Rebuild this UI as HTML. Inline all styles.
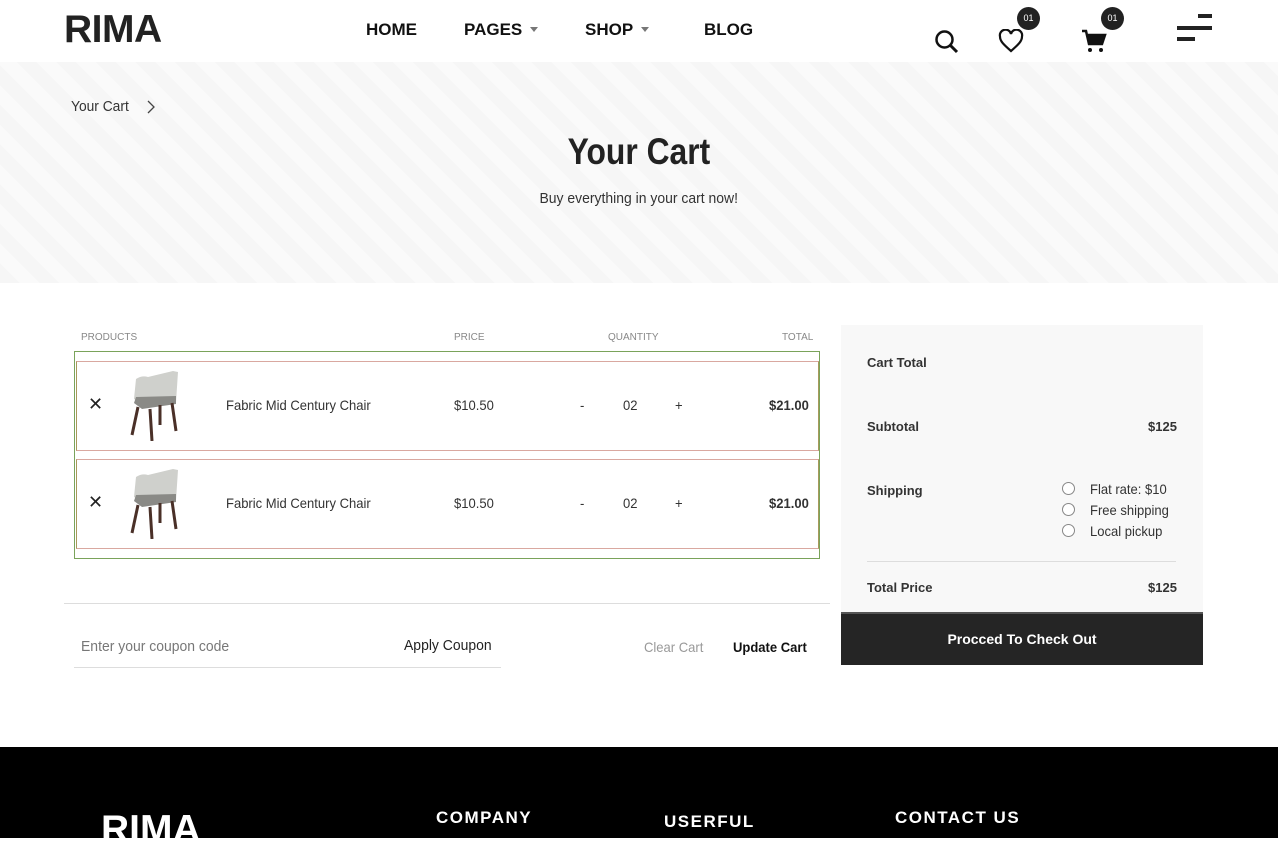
<!DOCTYPE html>
<html><head><meta charset="utf-8"><style>
*{margin:0;padding:0;box-sizing:border-box}
body{width:1280px;height:838px;overflow:hidden;background:#fff;font-family:"Liberation Sans",sans-serif;color:#222;position:relative}
.a{position:absolute;white-space:nowrap}
.nav{font-weight:bold;font-size:17px;color:#111;top:20px}
.car{display:inline-block;width:0;height:0;border-left:4px solid transparent;border-right:4px solid transparent;border-top:5px solid #777;margin-left:8px;vertical-align:3px}
.badge{position:absolute;width:23px;height:23px;border-radius:50%;background:#222;color:#fff;font-size:9px;text-align:center;line-height:23px}
.banner{position:absolute;left:0;top:62px;width:1278px;height:221px;background:#f8f8f8;background-image:repeating-linear-gradient(45deg,#f6f6f6 0 14px,#fafafa 14px 28px)}
.hd{font-size:10px;color:#888;top:332px}
.row{position:absolute;left:76px;width:743px;height:90px;border:1px solid #a89a5c;border-top-color:#d9a8a0;border-bottom-color:#d9a8a0}
.t{font-size:14px;color:#333;transform:scaleX(.93);transform-origin:left}
.sm{font-size:13px;font-weight:bold;color:#333}
.radio{position:absolute;width:13px;height:13px;border:1px solid #888;border-radius:50%;background:#fff}
.fh{color:#fff;font-weight:bold;font-size:17px;letter-spacing:1.5px}
</style></head><body>
<div class="a" style="left:64px;top:8px;font-size:39px;font-weight:bold;color:#222;letter-spacing:-0.5px">RIMA</div>
<div class="a nav" style="left:366px">HOME</div>
<div class="a nav" style="left:464px">PAGES<span class="car"></span></div>
<div class="a nav" style="left:585px">SHOP<span class="car"></span></div>
<div class="a nav" style="left:704px">BLOG</div>
<svg class="a" style="left:934px;top:29px" width="26" height="26" viewBox="0 0 26 26"><circle cx="10.5" cy="10.5" r="8" fill="none" stroke="#111" stroke-width="2.5"/><line x1="16.5" y1="16.5" x2="23" y2="23" stroke="#111" stroke-width="3"/></svg>
<svg class="a" style="left:998px;top:29px" width="26" height="24" viewBox="0 0 26 24"><path d="M13 22 C5 15 2 12 2 7.5 A5.5 5.5 0 0 1 13 5 A5.5 5.5 0 0 1 24 7.5 C24 12 21 15 13 22Z" fill="none" stroke="#111" stroke-width="2.2"/></svg>
<div class="badge" style="left:1017px;top:7px">01</div>
<svg class="a" style="left:1081px;top:29px" width="26" height="25" viewBox="0 0 26 25"><path d="M1 2h4l3 13h13l3-9H7" fill="none" stroke="#111" stroke-width="2.5"/><path d="M7 6h17l-3 9H8z" fill="#111"/><circle cx="9" cy="21" r="2" fill="#111"/><circle cx="20" cy="21" r="2" fill="#111"/></svg>
<div class="badge" style="left:1101px;top:7px">01</div>
<div class="a" style="left:1198px;top:14px;width:14px;height:4px;background:#222"></div>
<div class="a" style="left:1177px;top:26px;width:35px;height:4px;background:#222"></div>
<div class="a" style="left:1177px;top:37px;width:18px;height:4px;background:#222"></div>

<div class="banner"></div>
<div class="a" style="left:71px;top:98px;font-size:15px;color:#333;transform:scaleX(.92);transform-origin:left">Your Cart</div>
<svg class="a" style="left:146px;top:99px" width="10" height="16"><path d="M2 2l6 6-6 6" fill="none" stroke="#444" stroke-width="1.3"/></svg>
<div class="a" style="left:0;width:1278px;text-align:center;top:131px;font-size:37px;font-weight:bold;color:#222"><span style="display:inline-block;transform:scaleX(.86)">Your Cart</span></div>
<div class="a" style="left:0;width:1278px;text-align:center;top:190px;font-size:15px;color:#333"><span style="display:inline-block;transform:scaleX(.93)">Buy everything in your cart now!</span></div>

<div class="a hd" style="left:81px">PRODUCTS</div>
<div class="a hd" style="left:454px">PRICE</div>
<div class="a hd" style="left:608px">QUANTITY</div>
<div class="a hd" style="left:782px">TOTAL</div>
<div class="a" style="left:74px;top:351px;width:746px;height:208px;border:1px solid #7aa35a"></div>
<div class="row" style="top:361px"></div>
<div class="row" style="top:459px"></div>

<div class="a" style="left:88px;top:394px;font-size:18px;color:#222;font-weight:normal">✕</div>
<div class="a" style="left:88px;top:492px;font-size:18px;color:#222">✕</div>
<svg class="a" style="left:128px;top:369px" width="54" height="72" viewBox="0 0 54 72"><path d="M8 10 Q14 6 20 8 L45 2 L50 3 L48 33 L16 36 L6 30Z" fill="#cfd0cc"/><path d="M8 28 L48 27 L48 35 L14 40 L6 34Z" fill="#8a8a86"/><path d="M10 38 L4 66 M22 40 L24 72 M44 34 L48 62 M32 36 L32 56" stroke="#4a3028" stroke-width="3"/></svg>
<svg class="a" style="left:128px;top:467px" width="54" height="72" viewBox="0 0 54 72"><path d="M8 10 Q14 6 20 8 L45 2 L50 3 L48 33 L16 36 L6 30Z" fill="#cfd0cc"/><path d="M8 28 L48 27 L48 35 L14 40 L6 34Z" fill="#8a8a86"/><path d="M10 38 L4 66 M22 40 L24 72 M44 34 L48 62 M32 36 L32 56" stroke="#4a3028" stroke-width="3"/></svg>
<div class="a t" style="left:226px;top:397px">Fabric Mid Century Chair</div>
<div class="a t" style="left:454px;top:397px">$10.50</div>
<div class="a t" style="left:580px;top:397px">-</div>
<div class="a t" style="left:623px;top:397px">02</div>
<div class="a t" style="left:675px;top:397px">+</div>
<div class="a t" style="left:769px;top:397px;font-weight:bold">$21.00</div>
<div class="a t" style="left:226px;top:495px">Fabric Mid Century Chair</div>
<div class="a t" style="left:454px;top:495px">$10.50</div>
<div class="a t" style="left:580px;top:495px">-</div>
<div class="a t" style="left:623px;top:495px">02</div>
<div class="a t" style="left:675px;top:495px">+</div>
<div class="a t" style="left:769px;top:495px;font-weight:bold">$21.00</div>

<div class="a" style="left:64px;top:603px;width:766px;height:1px;background:#ddd"></div>
<div class="a t" style="left:81px;top:638px;font-size:15px;color:#777">Enter your coupon code</div>
<div class="a t" style="left:404px;top:637px;font-size:15px;color:#222">Apply Coupon</div>
<div class="a" style="left:74px;top:667px;width:427px;height:1px;background:#ddd"></div>
<div class="a t" style="left:644px;top:639px;color:#999">Clear Cart</div>
<div class="a t" style="left:733px;top:639px;font-weight:bold;color:#111">Update Cart</div>

<div class="a" style="left:841px;top:325px;width:362px;height:288px;background:#f8f8f8"></div>
<div class="a sm" style="left:867px;top:355px">Cart Total</div>
<div class="a sm" style="left:867px;top:419px">Subtotal</div>
<div class="a sm" style="left:1148px;top:419px">$125</div>
<div class="a sm" style="left:867px;top:483px">Shipping</div>
<div class="radio" style="left:1062px;top:482px"></div>
<div class="radio" style="left:1062px;top:503px"></div>
<div class="radio" style="left:1062px;top:524px"></div>
<div class="a t" style="left:1090px;top:481px">Flat rate: $10</div>
<div class="a t" style="left:1090px;top:502px">Free shipping</div>
<div class="a t" style="left:1090px;top:523px">Local pickup</div>
<div class="a" style="left:867px;top:561px;width:309px;height:1px;background:#ddd"></div>
<div class="a sm" style="left:867px;top:580px">Total Price</div>
<div class="a sm" style="left:1148px;top:580px">$125</div>
<div class="a" style="left:841px;top:612px;width:362px;height:53px;background:#252525;border-top:2px solid #555;color:#fff;font-weight:bold;font-size:14px;text-align:center;line-height:50px">Procced To Check Out</div>

<div class="a" style="left:0;top:747px;width:1278px;height:91px;background:#000"></div>
<div class="a" style="left:101px;top:808px;font-size:39px;font-weight:bold;color:#fff">RIMA</div>
<div class="a fh" style="left:436px;top:808px">COMPANY</div>
<div class="a fh" style="left:664px;top:812px">USERFUL</div>
<div class="a fh" style="left:895px;top:808px">CONTACT US</div>
</body></html>
